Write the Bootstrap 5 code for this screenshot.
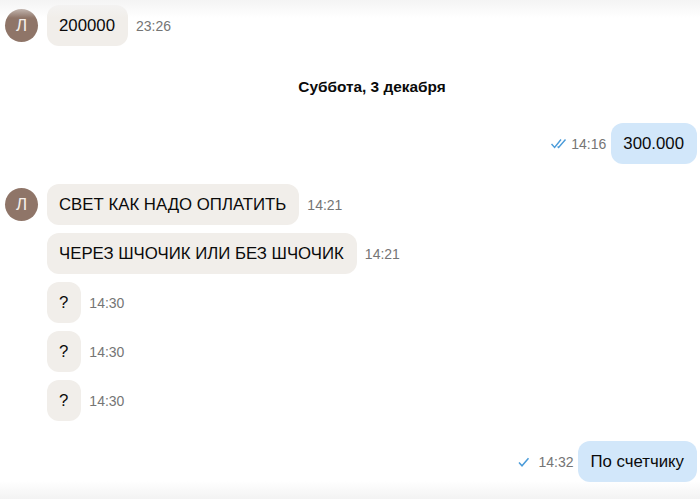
<!DOCTYPE html>
<html lang="ru">
<head>
    <meta charset="UTF-8">
    <meta name="viewport" content="width=device-width, initial-scale=1.0">
    <title>Чат</title>
    <link href="https://cdn.jsdelivr.net/npm/bootstrap@5.3.3/dist/css/bootstrap.min.css" rel="stylesheet">
    <style>
        body {
            background-color: #fff;
            font-family: "Liberation Sans", Arial, sans-serif;
            overflow: hidden;
        }
        .chat-page {
            height: 499px;
            padding: 5px 3px 0 5px;
            overflow: hidden;
        }
        .chat-page::before,
        .chat-page::after {
            content: "";
            position: absolute;
            left: 0;
            right: 0;
            height: 18px;
            pointer-events: none;
        }
        .chat-page::before {
            top: 0;
            background: linear-gradient(#f4f4f4, rgba(255, 255, 255, 0));
        }
        .chat-page::after {
            bottom: 0;
            background: linear-gradient(rgba(255, 255, 255, 0), #f3f3f3);
        }
        .msg-group {
            gap: 8px;
        }
        .avatar-col {
            width: 42px;
            flex: none;
        }
        .avatar-round {
            width: 33px;
            height: 33px;
            margin-top: 4px;
            border-radius: 50%;
            background-color: #8f7568;
            color: #f5efeb;
            font-size: 17px;
        }
        .bubble {
            height: 41px;
            padding: 0 13px 0 12px;
            border-radius: 12px;
            font-size: 16.8px;
            color: #0a0a0a;
            white-space: nowrap;
        }
        .bubble-in {
            background-color: #f1eeea;
        }
        .bubble-out {
            background-color: #d2e7fa;
        }
        .msg-time {
            font-size: 14px;
            color: #757575;
            margin-top: 2px;
        }
        .date-label {
            margin: 32px 0 28px 42px;
            font-size: 15.4px;
            font-weight: 700;
            line-height: 17px;
            color: #0a0a0a;
        }
        .gap-after {
            margin-bottom: 20px;
        }
        .gap-before {
            margin-top: 20px;
        }
        .tick {
            display: block;
            flex: none;
        }
        .tick-double {
            margin-right: 4px;
        }
        .tick-single {
            margin-right: 8px;
        }
        .time-out {
            margin-right: 5px;
        }
    </style>
</head>
<body>

    <div class="chat-page position-relative">

        <div class="d-flex">
            <div class="avatar-col">
                <div class="avatar-round d-flex align-items-center justify-content-center">Л</div>
            </div>
            <div class="d-flex align-items-center gap-2">
                <div class="bubble bubble-in d-flex align-items-center">200000</div>
                <span class="msg-time">23:26</span>
            </div>
        </div>

        <div class="date-label text-center">Суббота, 3 декабря</div>

        <div class="d-flex justify-content-end align-items-center gap-after">
            <svg class="tick tick-double" width="16" height="11" viewBox="0 0 16 11" fill="none" stroke="#4a9bd9" stroke-width="1.4">
                <path d="M0.5 6 L3.6 9.5 L10 1.5"/>
                <path d="M6.6 8.6 L7.6 9.5 L14.5 1.5"/>
            </svg>
            <span class="msg-time time-out">14:16</span>
            <div class="bubble bubble-out d-flex align-items-center">300.000</div>
        </div>

        <div class="d-flex">
            <div class="avatar-col">
                <div class="avatar-round d-flex align-items-center justify-content-center">Л</div>
            </div>
            <div class="msg-group d-flex flex-column">
                <div class="d-flex align-items-center gap-2">
                    <div class="bubble bubble-in d-flex align-items-center">СВЕТ КАК НАДО ОПЛАТИТЬ</div>
                    <span class="msg-time">14:21</span>
                </div>
                <div class="d-flex align-items-center gap-2">
                    <div class="bubble bubble-in d-flex align-items-center">ЧЕРЕЗ ШЧОЧИК ИЛИ БЕЗ ШЧОЧИК</div>
                    <span class="msg-time">14:21</span>
                </div>
                <div class="d-flex align-items-center gap-2">
                    <div class="bubble bubble-in d-flex align-items-center">?</div>
                    <span class="msg-time">14:30</span>
                </div>
                <div class="d-flex align-items-center gap-2">
                    <div class="bubble bubble-in d-flex align-items-center">?</div>
                    <span class="msg-time">14:30</span>
                </div>
                <div class="d-flex align-items-center gap-2">
                    <div class="bubble bubble-in d-flex align-items-center">?</div>
                    <span class="msg-time">14:30</span>
                </div>
            </div>
        </div>

        <div class="d-flex justify-content-end align-items-center gap-before">
            <svg class="tick tick-single" width="12" height="10" viewBox="0 0 12 10" fill="none" stroke="#4a9bd9" stroke-width="1.5">
                <path d="M1 5.5 L4 8.8 L10.5 1.2"/>
            </svg>
            <span class="msg-time time-out">14:32</span>
            <div class="bubble bubble-out d-flex align-items-center">По счетчику</div>
        </div>

    </div>

    <script src="https://cdn.jsdelivr.net/npm/bootstrap@5.3.3/dist/js/bootstrap.bundle.min.js"></script>
</body>
</html>
